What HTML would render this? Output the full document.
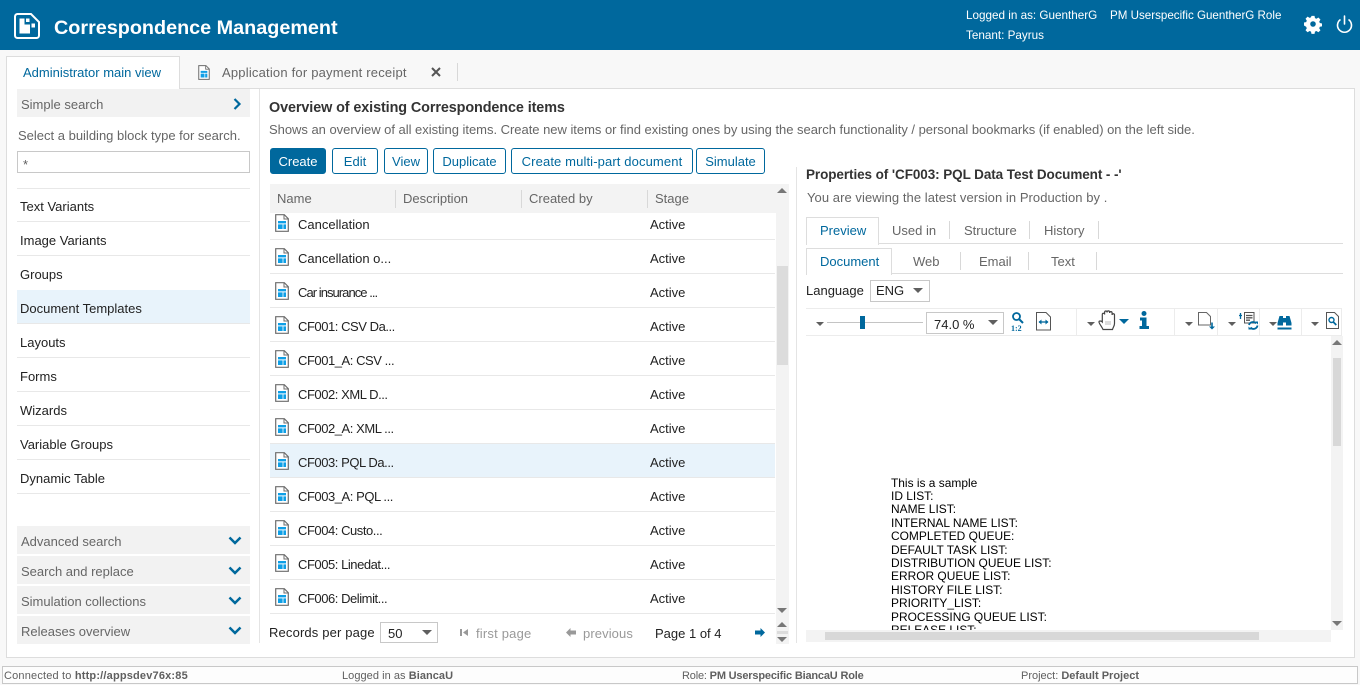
<!DOCTYPE html>
<html lang="en"><head><meta charset="utf-8"><title>Correspondence Management</title>
<style>
html,body{margin:0;padding:0;width:1360px;height:685px;overflow:hidden;background:#f8f8f8}
body{position:relative;font-family:"Liberation Sans",sans-serif;font-size:13px;color:#222}
.a,.t{position:absolute}
.t{white-space:nowrap;line-height:20px;margin-top:1px}
.g{color:#666}
.d{color:#5f5f5f}
.b{color:#00689d}
.cf{letter-spacing:-.45px}
.btn{position:absolute;top:148px;height:24px;line-height:25px;border:1px solid #00689d;border-radius:3px;background:#fff;color:#00689d;text-align:center;font-size:13px}
.sep{position:absolute;height:1px;background:#e8e8e8}
.v{position:absolute;width:1px;background:#d8d8d8}
.acc{position:absolute;left:17px;width:233px;height:28px;background:#f2f2f2;line-height:31px;color:#666;text-indent:4px}
.sel{position:absolute;background:#fff;border:1px solid #c8c8c8;box-sizing:border-box}
svg{position:absolute;overflow:visible}
.tri{position:absolute;width:0;height:0;border-left:5px solid transparent;border-right:5px solid transparent;border-top:5px solid #5f5f5f}
.s{border-left-width:4px;border-right-width:4px;border-top-width:4px}
.tb{border-top-color:#00689d}
.up{position:absolute;width:0;height:0;border-left:5px solid transparent;border-right:5px solid transparent;border-bottom:5px solid #777}
.dn{position:absolute;width:0;height:0;border-left:5px solid transparent;border-right:5px solid transparent;border-top:5px solid #777}
.pdf{position:absolute;white-space:nowrap;font-size:11.95px;line-height:13.4px;color:#000}
</style></head><body>
<svg width="0" height="0" style="position:absolute"><defs>
<symbol id="doc" viewBox="0 0 14 18"><path d="M.7.700h8.600l4 4v12.600H.7z" fill="#fff" stroke="#6d6d6d" stroke-width="1.200"/><path d="M9 .7v4.300h4.300" fill="none" stroke="#6d6d6d"/><path d="M3 7h8v2.400H3zM3 10.400h4.600V15H3zM8.400 10.400H11V15H8.400z" fill="#0f9fe6"/></symbol>
<symbol id="chev" viewBox="0 0 14 9"><path d="M1.500 1.500L7 7l5.500-5.500" fill="none" stroke="#00689d" stroke-width="2.500"/></symbol>
</defs></svg>

<!-- header -->
<div class="a" style="left:0;top:0;width:1360px;height:50px;background:#00689d"></div>
<svg style="left:14px;top:13px" width="26" height="26" viewBox="0 0 26 26"><path d="M3.500 1h13.500l8 8v13.500a2.500 2.500 0 0 1-2.500 2.500h-19A2.500 2.500 0 0 1 1 22.500v-19A2.500 2.500 0 0 1 3.500 1z" fill="none" stroke="#fff" stroke-width="2"/><path d="M5.500 5.500h5v6h5.500v9h-10.500z M12 5.500h3.500v3.500H12z M17.500 10.500h3.500v4h-3.500z" fill="#fff"/></svg>
<div class="t" style="left:54px;top:17px;font-size:19.8px;font-weight:bold;color:#fff">Correspondence Management</div>
<div class="t" style="left:966px;top:5px;font-size:11.7px;color:#fff">Logged in as: GuentherG</div>
<div class="t" style="left:1110px;top:5px;font-size:11.6px;color:#fff">PM Userspecific GuentherG Role</div>
<div class="t" style="left:966px;top:25px;font-size:11.7px;color:#fff">Tenant: Payrus</div>
<svg style="left:1304px;top:15px" width="18" height="18" viewBox="0 0 18 18"><path fill="#fff" fill-rule="evenodd" d="M7.300 0h3.400l.5 2.500 1.600.7 2.200-1.400 2.300 2.300-1.400 2.200.7 1.600 2.400.5v3.200l-2.400.5-.7 1.600 1.400 2.200-2.300 2.300-2.200-1.400-1.600.7-.5 2.500H7.300l-.5-2.500-1.600-.7-2.200 1.400-2.300-2.300 1.400-2.200-.7-1.600L-1 10.600V7.400l2.400-.5.7-1.600L.7 3.100 3 .8l2.200 1.400 1.600-.7zM9 5.900a3.100 3.100 0 1 0 0 6.200 3.100 3.100 0 0 0 0-6.200z" transform="translate(.9 .9) scale(.9)"/></svg>
<svg style="left:1336px;top:15px" width="17" height="18" viewBox="0 0 17 18"><path d="M8.500 1v8" stroke="#fff" stroke-width="1.600" fill="none" stroke-linecap="round"/><path d="M4.500 4.500a7 7 0 1 0 8 0" stroke="#fff" stroke-width="1.600" fill="none"/></svg>

<!-- main frame -->
<div class="a" style="left:6px;top:88px;width:1347px;height:568px;background:#fff;border:1px solid #ddd"></div>
<div class="a" style="left:6px;top:56px;width:172px;height:33px;background:#fff;border:1px solid #ddd;border-bottom:0"></div>
<div class="t b" style="left:23px;top:62px">Administrator main view</div>
<svg style="left:198px;top:65px" width="12" height="15"><use href="#doc" width="12" height="15"/></svg>
<div class="t g" style="left:222px;top:62px;letter-spacing:.2px">Application for payment receipt</div>
<svg style="left:431px;top:67px" width="10" height="10" viewBox="0 0 10 10"><path d="M1 1l8 8M9 1L1 9" stroke="#555" stroke-width="2"/></svg>
<div class="v" style="left:457px;top:63px;height:18px"></div>

<!-- left panel -->
<div class="acc" style="top:89px">Simple search</div>
<svg style="left:233px;top:98px" width="8" height="12" viewBox="0 0 8 12"><path d="M1.500 1l5 5-5 5" fill="none" stroke="#00689d" stroke-width="2.200"/></svg>
<div class="t g" style="left:18px;top:125px">Select a building block type for search.</div>
<div class="sel" style="left:17px;top:151px;width:233px;height:22px"></div>
<div class="t d" style="left:23px;top:154px">*</div>
<div class="sep" style="left:17px;top:188px;width:233px"></div>
<div class="sep" style="left:17px;top:221px;width:233px"></div>
<div class="sep" style="left:17px;top:255px;width:233px"></div>
<div class="a" style="left:17px;top:290px;width:233px;height:34px;background:#e8f3fb"></div>
<div class="sep" style="left:17px;top:357px;width:233px"></div>
<div class="sep" style="left:17px;top:391px;width:233px"></div>
<div class="sep" style="left:17px;top:425px;width:233px"></div>
<div class="sep" style="left:17px;top:459px;width:233px"></div>
<div class="sep" style="left:17px;top:493px;width:233px"></div>
<div class="sep" style="left:17px;top:323px;width:233px"></div>
<div class="t" style="left:20px;top:196px">Text Variants</div>
<div class="t" style="left:20px;top:230px">Image Variants</div>
<div class="t" style="left:20px;top:264px">Groups</div>
<div class="t" style="left:20px;top:298px">Document Templates</div>
<div class="t" style="left:20px;top:332px">Layouts</div>
<div class="t" style="left:20px;top:366px">Forms</div>
<div class="t" style="left:20px;top:400px">Wizards</div>
<div class="t" style="left:20px;top:434px">Variable Groups</div>
<div class="t" style="left:20px;top:468px">Dynamic Table</div>
<div class="acc" style="top:526px">Advanced search</div>
<div class="acc" style="top:556px">Search and replace</div>
<div class="acc" style="top:586px">Simulation collections</div>
<div class="acc" style="top:616px">Releases overview</div>
<svg style="left:228px;top:536px" width="14" height="9"><use href="#chev" width="14" height="9"/></svg>
<svg style="left:228px;top:566px" width="14" height="9"><use href="#chev" width="14" height="9"/></svg>
<svg style="left:228px;top:596px" width="14" height="9"><use href="#chev" width="14" height="9"/></svg>
<svg style="left:228px;top:626px" width="14" height="9"><use href="#chev" width="14" height="9"/></svg>
<div class="v" style="left:259px;top:89px;height:554px;background:#e4e4e4"></div>

<!-- center -->
<div class="t" style="left:269px;top:97px;font-size:14.4px;font-weight:bold;color:#333;letter-spacing:-.1px">Overview of existing Correspondence items</div>
<div class="t g" style="left:269px;top:119px;letter-spacing:-.025px">Shows an overview of all existing items. Create new items or find existing ones by using the search functionality / personal bookmarks (if enabled) on the left side.</div>
<div class="btn" style="left:270px;width:54px;background:#00689d;color:#fff">Create</div>
<div class="btn" style="left:332px;width:44px">Edit</div>
<div class="btn" style="left:384px;width:42px">View</div>
<div class="btn" style="left:433px;width:71px">Duplicate</div>
<div class="btn" style="left:511px;width:180px;letter-spacing:.12px">Create multi-part document</div>
<div class="btn" style="left:696px;width:67px">Simulate</div>

<div class="a" style="left:270px;top:184px;width:519px;height:29px;background:#f3f3f3"></div>
<div class="t g" style="left:277px;top:188px">Name</div>
<div class="v" style="left:395px;top:190px;height:18px"></div>
<div class="t g" style="left:403px;top:188px">Description</div>
<div class="v" style="left:521px;top:190px;height:18px"></div>
<div class="t g" style="left:529px;top:188px">Created by</div>
<div class="v" style="left:647px;top:190px;height:18px"></div>
<div class="t g" style="left:655px;top:188px">Stage</div>

<div class="a" style="left:270px;top:444px;width:505px;height:34px;background:#e8f3fb"></div>
<div class="sep" style="left:270px;top:239px;width:505px"></div>
<div class="sep" style="left:270px;top:273px;width:505px"></div>
<div class="sep" style="left:270px;top:307px;width:505px"></div>
<div class="sep" style="left:270px;top:341px;width:505px"></div>
<div class="sep" style="left:270px;top:375px;width:505px"></div>
<div class="sep" style="left:270px;top:409px;width:505px"></div>
<div class="sep" style="left:270px;top:443px;width:505px"></div>
<div class="sep" style="left:270px;top:477px;width:505px"></div>
<div class="sep" style="left:270px;top:511px;width:505px"></div>
<div class="sep" style="left:270px;top:545px;width:505px"></div>
<div class="sep" style="left:270px;top:579px;width:505px"></div>
<div class="sep" style="left:270px;top:613px;width:505px"></div>

<svg style="left:275px;top:214px" width="14" height="18"><use href="#doc" width="14" height="18"/></svg><div class="t" style="left:298px;top:214px">Cancellation</div><div class="t" style="left:650px;top:214px">Active</div>
<svg style="left:275px;top:248px" width="14" height="18"><use href="#doc" width="14" height="18"/></svg><div class="t" style="left:298px;top:248px">Cancellation o...</div><div class="t" style="left:650px;top:248px">Active</div>
<svg style="left:275px;top:282px" width="14" height="18"><use href="#doc" width="14" height="18"/></svg><div class="t" style="left:298px;top:282px;letter-spacing:-.95px">Car insurance ...</div><div class="t" style="left:650px;top:282px">Active</div>
<svg style="left:275px;top:316px" width="14" height="18"><use href="#doc" width="14" height="18"/></svg><div class="t cf" style="left:298px;top:316px">CF001: CSV Da...</div><div class="t" style="left:650px;top:316px">Active</div>
<svg style="left:275px;top:350px" width="14" height="18"><use href="#doc" width="14" height="18"/></svg><div class="t cf" style="left:298px;top:350px">CF001_A: CSV ...</div><div class="t" style="left:650px;top:350px">Active</div>
<svg style="left:275px;top:384px" width="14" height="18"><use href="#doc" width="14" height="18"/></svg><div class="t cf" style="left:298px;top:384px">CF002: XML D...</div><div class="t" style="left:650px;top:384px">Active</div>
<svg style="left:275px;top:418px" width="14" height="18"><use href="#doc" width="14" height="18"/></svg><div class="t cf" style="left:298px;top:418px">CF002_A: XML ...</div><div class="t" style="left:650px;top:418px">Active</div>
<svg style="left:275px;top:452px" width="14" height="18"><use href="#doc" width="14" height="18"/></svg><div class="t cf" style="left:298px;top:452px">CF003: PQL Da...</div><div class="t" style="left:650px;top:452px">Active</div>
<svg style="left:275px;top:486px" width="14" height="18"><use href="#doc" width="14" height="18"/></svg><div class="t cf" style="left:298px;top:486px">CF003_A: PQL ...</div><div class="t" style="left:650px;top:486px">Active</div>
<svg style="left:275px;top:520px" width="14" height="18"><use href="#doc" width="14" height="18"/></svg><div class="t cf" style="left:298px;top:520px">CF004: Custo...</div><div class="t" style="left:650px;top:520px">Active</div>
<svg style="left:275px;top:554px" width="14" height="18"><use href="#doc" width="14" height="18"/></svg><div class="t cf" style="left:298px;top:554px">CF005: Linedat...</div><div class="t" style="left:650px;top:554px">Active</div>
<svg style="left:275px;top:588px" width="14" height="18"><use href="#doc" width="14" height="18"/></svg><div class="t cf" style="left:298px;top:588px">CF006: Delimit...</div><div class="t" style="left:650px;top:588px">Active</div>

<!-- list scrollbar -->
<div class="a" style="left:776px;top:184px;width:13px;height:460px;background:#f3f3f3"></div>
<div class="up" style="left:777px;top:188px"></div>
<div class="a" style="left:777px;top:266px;width:11px;height:99px;background:#dcdcdc"></div>
<div class="dn" style="left:777px;top:608px"></div>
<div class="up" style="left:777px;top:622px"></div>
<div class="a" style="left:777px;top:631px;width:11px;height:3px;background:#dcdcdc"></div>
<div class="dn" style="left:777px;top:637px"></div>

<!-- pagination -->
<div class="t" style="left:269px;top:622px;letter-spacing:.15px">Records per page</div>
<div class="sel" style="left:380px;top:622px;width:58px;height:21px"></div>
<div class="t" style="left:388px;top:623px">50</div>
<div class="tri" style="left:422px;top:630px"></div>
<svg style="left:460px;top:628px" width="9" height="9" viewBox="0 0 9 9"><path d="M0 1h2v7H0zM8 1v7L3 4.500z" fill="#999"/></svg>
<div class="t" style="left:476px;top:623px;color:#999;letter-spacing:.2px">first page</div>
<svg style="left:566px;top:628px" width="11" height="9" viewBox="0 0 11 9"><path d="M0 4.500L4.500 0v2.500H10v4H4.500V9z" fill="#999"/></svg>
<div class="t" style="left:583px;top:623px;color:#999;letter-spacing:.1px">previous</div>
<div class="t" style="left:655px;top:623px">Page 1 of 4</div>
<svg style="left:754px;top:628px" width="11" height="9" viewBox="0 0 11 9"><path d="M11 4.500L6.500 0v2.500H1v4h5.500V9z" fill="#00689d"/></svg>

<!-- right panel -->
<div class="v" style="left:796px;top:167px;height:476px;background:#e4e4e4"></div>
<div class="t" style="left:806px;top:164px;font-size:13.5px;font-weight:bold;color:#333;letter-spacing:-.08px">Properties of 'CF003: PQL Data Test Document - -'</div>
<div class="t g" style="left:807px;top:187px;letter-spacing:.06px">You are viewing the latest version in Production by .</div>

<div class="sep" style="left:806px;top:243px;width:537px;background:#ddd"></div>
<div class="a" style="left:806px;top:217px;width:71px;height:27px;background:#fff;border:1px solid #ddd;border-bottom:0"></div>
<div class="t b" style="left:820px;top:220px">Preview</div>
<div class="t g" style="left:892px;top:220px">Used in</div>
<div class="v" style="left:949px;top:221px;height:18px"></div>
<div class="t g" style="left:964px;top:220px">Structure</div>
<div class="v" style="left:1029px;top:221px;height:18px"></div>
<div class="t g" style="left:1044px;top:220px">History</div>
<div class="v" style="left:1098px;top:221px;height:18px"></div>

<div class="sep" style="left:806px;top:273px;width:537px;background:#ddd"></div>
<div class="a" style="left:806px;top:248px;width:84px;height:26px;background:#fff;border:1px solid #ddd;border-bottom:0"></div>
<div class="t b" style="left:820px;top:251px">Document</div>
<div class="t g" style="left:913px;top:251px">Web</div>
<div class="v" style="left:960px;top:252px;height:18px"></div>
<div class="t g" style="left:979px;top:251px">Email</div>
<div class="v" style="left:1028px;top:252px;height:18px"></div>
<div class="t g" style="left:1051px;top:251px">Text</div>
<div class="v" style="left:1096px;top:252px;height:18px"></div>

<div class="t" style="left:806px;top:280px">Language</div>
<div class="sel" style="left:870px;top:280px;width:60px;height:22px"></div>
<div class="t" style="left:876px;top:280px">ENG</div>
<div class="tri" style="left:913px;top:288px"></div>

<!-- pdf toolbar -->
<div class="a" style="left:806px;top:308px;width:535px;height:26px;border:1px solid #ececec;border-left:0"></div>
<div class="tri s" style="left:816px;top:322px"></div>
<div class="a" style="left:827px;top:322px;width:96px;height:1px;background:#c4c4c4"></div>
<div class="a" style="left:860px;top:316px;width:5px;height:13px;background:#00689d"></div>
<div class="sel" style="left:926px;top:312px;width:78px;height:22px"></div>
<div class="t" style="left:934px;top:314px">74.0 %</div>
<div class="tri" style="left:988px;top:320px"></div>
<svg style="left:1011px;top:312px" width="13" height="20" viewBox="0 0 13 20"><circle cx="5.500" cy="4.500" r="3.500" fill="none" stroke="#00689d" stroke-width="1.800"/><path d="M8 7l4 4" stroke="#00689d" stroke-width="2"/><text x="0" y="19" font-family="Liberation Serif,serif" font-size="8" font-weight="bold" fill="#00689d">1:2</text></svg>
<svg style="left:1036px;top:312px" width="15" height="19" viewBox="0 0 15 19"><path d="M.5.500h9.500l4.500 4.500v13H.5z" fill="#fff" stroke="#555"/><path d="M3 10h9" stroke="#00689d" stroke-width="1.300"/><path d="M2.500 10l3-2.500v5zM12.500 10l-3-2.500v5z" fill="#00689d"/></svg>
<div class="v" style="left:1076px;top:309px;height:26px;background:#ececec"></div>
<div class="tri s" style="left:1087px;top:322px"></div>
<svg style="left:1098px;top:310px" width="20" height="21" viewBox="0 0 20 21"><path d="M5 19.500C4 17 1 13.500 1 12c0-1.300 2-1.400 3.300 0V4.500c0-1.700 2.300-1.700 2.300 0V2.500c0-2 2.500-2 2.500 0v-.3c0-1.800 2.500-1.800 2.500 0v.8c0-1.800 2.500-1.800 2.500 0V5c0-1.700 2.400-1.700 2.400 0v8.500c0 2.500-1.300 3.500-2 6z" fill="#fff" stroke="#444" stroke-width="1.200"/><path d="M8 11v4M10 11v4M12 11v4" stroke="#bbb"/></svg>
<div class="tri tb" style="left:1119px;top:319px;border-width:5px 5px 0"></div>
<svg style="left:1139px;top:311px" width="10" height="18" viewBox="0 0 10 18"><circle cx="5" cy="2.500" r="2.500" fill="#00689d"/><path d="M1 6.500h6.500v8.500H10v3H.5v-3H3V9.500H1z" fill="#00689d"/></svg>
<div class="v" style="left:1174px;top:309px;height:26px;background:#ececec"></div>
<div class="tri s" style="left:1185px;top:322px"></div>
<svg style="left:1198px;top:312px" width="18" height="18" viewBox="0 0 18 18"><path d="M.5.500h8l4 4v8.500H.5z" fill="none" stroke="#666"/><path d="M13.200 10.500h1.600v4H17l-3 3-3-3h2.200z" fill="#00689d"/></svg>
<div class="v" style="left:1217px;top:309px;height:26px;background:#ececec"></div>
<div class="tri s" style="left:1228px;top:322px"></div>
<svg style="left:1239px;top:312px" width="20" height="18" viewBox="0 0 20 18"><path d="M0 3.500h3M1.500 1v6" stroke="#00689d" stroke-width="1.300"/><path d="M5.500.5h9.500v10.500H5.500z" fill="#fff" stroke="#555"/><path d="M7 3.500h6.500M7 5.800h6.500M7 8.200h4" stroke="#555" stroke-width="1.300"/><path d="M10 13a4 4 0 0 1 7-1.500" fill="none" stroke="#00689d" stroke-width="1.800"/><path d="M18.500 13.500a4 4 0 0 1-7 2" fill="none" stroke="#00689d" stroke-width="1.800"/><path d="M16 9.500h3v3zM12.500 17.500h-3v-3z" fill="#00689d"/></svg>
<div class="v" style="left:1259px;top:309px;height:26px;background:#ececec"></div>
<div class="tri s" style="left:1269px;top:322px"></div>
<svg style="left:1277px;top:316px" width="15" height="14" viewBox="0 0 15 14"><path d="M2.500 0h3.500v2h3V0h3.500l2 7v2.500H9V6.500H6v3H.5V7zM.5 11.500h14V13.500H.5z" fill="#00689d"/></svg>
<div class="v" style="left:1301px;top:309px;height:26px;background:#ececec"></div>
<div class="tri s" style="left:1311px;top:322px"></div>
<svg style="left:1326px;top:312px" width="13" height="17" viewBox="0 0 13 17"><path d="M.5.500h8l4 4v12H.5z" fill="#fff" stroke="#555"/><circle cx="5.500" cy="8" r="2.500" fill="none" stroke="#00689d" stroke-width="1.400"/><path d="M7.300 10l3 3" stroke="#00689d" stroke-width="1.700"/></svg>

<!-- pdf view -->
<div class="a" style="left:807px;top:336px;width:524px;height:294px;overflow:hidden;background:#fff">
<div class="pdf" style="left:84px;top:140.500px">This is a sample<br>ID LIST:<br>NAME LIST:<br>INTERNAL NAME LIST:<br>COMPLETED QUEUE:<br>DEFAULT TASK LIST:<br>DISTRIBUTION QUEUE LIST:<br>ERROR QUEUE LIST:<br>HISTORY FILE LIST:<br>PRIORITY_LIST:<br>PROCESSING QUEUE LIST:<br>RELEASE LIST:</div>
</div>
<div class="a" style="left:1331px;top:336px;width:12px;height:294px;background:#f3f3f3"></div>
<div class="up" style="left:1332px;top:340px"></div>
<div class="a" style="left:1333px;top:358px;width:8px;height:88px;background:#d8d8d8"></div>
<div class="dn" style="left:1332px;top:621px"></div>
<div class="a" style="left:806px;top:630px;width:525px;height:12px;background:#f3f3f3"></div>
<div class="a" style="left:825px;top:632px;width:434px;height:8px;background:#d8d8d8"></div>

<!-- status bar -->
<div class="a" style="left:2px;top:666px;width:1354px;height:16px;background:#fdfdfd;border:1px solid #c8c8c8"></div>
<div class="t d" style="left:4px;top:665px;font-size:11px;letter-spacing:.18px">Connected to <b>http://appsdev76x:85</b></div>
<div class="t d" style="left:342px;top:665px;font-size:11px;letter-spacing:.05px">Logged in as <b>BiancaU</b></div>
<div class="t d" style="left:682px;top:665px;font-size:11px;letter-spacing:-.18px">Role: <b>PM Userspecific BiancaU Role</b></div>
<div class="t d" style="left:1021px;top:665px;font-size:11px">Project: <b>Default Project</b></div>
</body></html>
